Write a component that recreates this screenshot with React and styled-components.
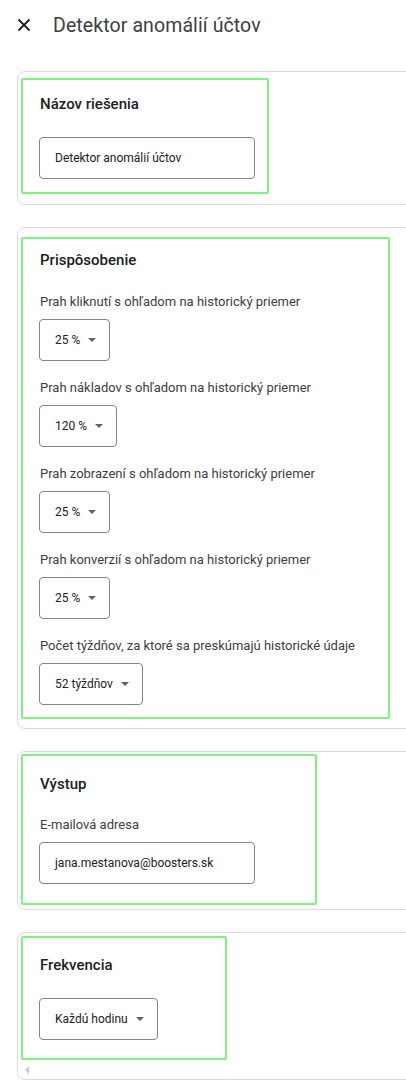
import React from 'react'
import styled, { createGlobalStyle } from 'styled-components'

const GlobalStyle = createGlobalStyle`
  body {
    margin: 0;
    background: #fff;
    font-family: Roboto, "Noto Sans", sans-serif;
    color: #202124;
    overflow-x: hidden;
  }
`

const Page = styled.div`
  width: 406px;
  overflow: hidden;
  padding-bottom: 4px;
`

const Header = styled.div`
  display: flex;
  align-items: center;
  height: 50px;
  padding-left: 17px;
  gap: 22px;
`

const CloseButton = styled.button`
  display: flex;
  align-items: center;
  justify-content: center;
  width: 14px;
  height: 14px;
  padding: 0;
  border: 0;
  background: none;
  color: #202124;
`

const Title = styled.h1`
  margin: 0;
  font-size: 19.5px;
  font-weight: 400;
  color: #3c4043;
  letter-spacing: 0.1px;
`

const Cards = styled.div`
  display: flex;
  flex-direction: column;
  gap: 22px;
  margin-top: 21px;
`

const Card = styled.div`
  position: relative;
  margin-left: 17px;
  width: 420px;
  border: 1px solid #dadce0;
  border-radius: 8px;
  padding: ${p => p.$pt}px 0 ${p => p.$pb}px 3px;
`

const Section = styled.div`
  width: ${p => p.$w}px;
  box-sizing: border-box;
  border: 2px solid #7ef47e;
  border-radius: 2px;
  padding: ${p => p.$pt}px 16px ${p => p.$pb}px;
  display: flex;
  flex-direction: column;
`

const SectionTitle = styled.h2`
  margin: 0 0 ${p => p.$gap}px 1px;
  font-size: 15px;
  line-height: 20px;
  font-weight: 500;
  color: #202124;
`

const Field = styled.div`
  display: flex;
  flex-direction: column;
  align-items: flex-start;
  gap: 8px;
  & + & {
    margin-top: 18px;
  }
`

const Label = styled.div`
  margin-left: 1px;
  font-size: 13px;
  line-height: 18px;
  color: #3c4043;
`

const TextBox = styled.div`
  width: 216px;
  height: 42px;
  box-sizing: border-box;
  border: 1px solid #80868b;
  border-radius: 4px;
  padding: 0 15px;
  display: flex;
  align-items: center;
  font-size: 12px;
  color: #202124;
`

const Select = styled.div`
  height: 42px;
  box-sizing: border-box;
  border: 1px solid #80868b;
  border-radius: 4px;
  padding: 0 13px 0 15px;
  display: inline-flex;
  align-items: center;
  gap: 8px;
  font-size: 12px;
  color: #202124;
`

const Caret = styled.span`
  width: 0;
  height: 0;
  border-left: 4.5px solid transparent;
  border-right: 4.5px solid transparent;
  border-top: 4.5px solid #5f6368;
`

const ScrollArrow = styled.span`
  position: absolute;
  left: 7px;
  bottom: 5px;
  width: 0;
  height: 0;
  border-top: 4px solid transparent;
  border-bottom: 4px solid transparent;
  border-right: 4px solid #c8c8c8;
`

const Dropdown = ({ value }) => (
  <Select>
    {value}
    <Caret />
  </Select>
)

const thresholds = [
  ['Prah kliknutí s ohľadom na historický priemer', '25 %'],
  ['Prah nákladov s ohľadom na historický priemer', '120 %'],
  ['Prah zobrazení s ohľadom na historický priemer', '25 %'],
  ['Prah konverzií s ohľadom na historický priemer', '25 %'],
  ['Počet týždňov, za ktoré sa preskúmajú historické údaje', '52 týždňov'],
]

const App = () => (
  <Page>
    <GlobalStyle />
    <Header>
      <CloseButton aria-label="Zavrieť">
        <svg width="14" height="14" viewBox="0 0 14 14">
          <path d="M1.5 1.5 L12.5 12.5 M12.5 1.5 L1.5 12.5" stroke="#202124" strokeWidth="1.8" />
        </svg>
      </CloseButton>
      <Title>Detektor anomálií účtov</Title>
    </Header>

    <Cards>
      <Card $pt={6} $pb={10}>
        <Section $w={248} $pt={14} $pb={13}>
          <SectionTitle $gap={23}>Názov riešenia</SectionTitle>
          <TextBox>Detektor anomálií účtov</TextBox>
        </Section>
      </Card>

      <Card $pt={9} $pb={9}>
        <Section $w={369} $pt={11} $pb={12}>
          <SectionTitle $gap={23}>Prispôsobenie</SectionTitle>
          {thresholds.map(([label, value]) => (
            <Field key={label}>
              <Label>{label}</Label>
              <Dropdown value={value} />
            </Field>
          ))}
        </Section>
      </Card>

      <Card $pt={2} $pb={4}>
        <Section $w={296} $pt={18} $pb={19}>
          <SectionTitle $gap={22}>Výstup</SectionTitle>
          <Field>
            <Label>E-mailová adresa</Label>
            <TextBox>jana.mestanova@boosters.sk</TextBox>
          </Field>
        </Section>
      </Card>

      <Card $pt={3} $pb={19}>
        <Section $w={206} $pt={17} $pb={18}>
          <SectionTitle $gap={23}>Frekvencia</SectionTitle>
          <div>
            <Dropdown value="Každú hodinu" />
          </div>
        </Section>
        <ScrollArrow />
      </Card>
    </Cards>
  </Page>
)

export default App
